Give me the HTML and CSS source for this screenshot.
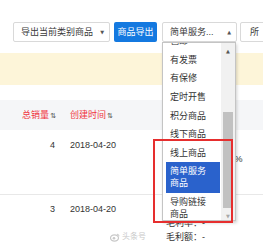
FILE: index.html
```html
<!DOCTYPE html>
<html>
<head>
<meta charset="utf-8">
<link rel="stylesheet" href="styles.css">
</head>
<body>
<div class="page">
  <div class="toolbar">
    <div class="select s1"><span>导出当前类别商品</span><span class="caret">▼</span></div>
    <div class="btn">商品导出</div>
    <div class="select s2"><span>简单服务...</span><span class="caret">▲</span></div>
    <div class="select s3"><span>所</span></div>
  </div>
  <div class="notice"></div>
  <div class="table">
    <div class="thead">
      <div class="c1 th">总销量<span class="sort">⇅</span></div>
      <div class="c2 th">创建时间<span class="sort">⇅</span></div>
    </div>
    <div class="row r1">
      <div class="c1">4</div>
      <div class="c2">2018-04-20</div>
      <div class="c3">
        <div>成本价：-</div>
        <div>毛利率：1000.00%</div>
        <div>毛利额：-</div>
      </div>
    </div>
    <div class="row r2">
      <div class="c1">3</div>
      <div class="c2">2018-04-20</div>
      <div class="c3">
        <div>成本价：-</div>
        <div>毛利率：-</div>
        <div>毛利额：-</div>
      </div>
    </div>
  </div>
  <div class="watermark"><svg width="10" height="9" viewBox="0 0 10 9"><ellipse cx="4.5" cy="5" rx="4" ry="3.2" fill="none" stroke="#c9c9c9" stroke-width="1.2"/><circle cx="4" cy="5.3" r="1.3" fill="#c9c9c9"/><path d="M7 1.2a2 2 0 0 1 2 2" fill="none" stroke="#c9c9c9" stroke-width="1"/></svg><span>头条号</span></div>
  <div class="dropdown">
    <div class="opts">
      <div class="optlist">
        <div class="opt">包邮</div>
        <div class="opt">有发票</div>
        <div class="opt">有保修</div>
        <div class="opt">定时开售</div>
        <div class="opt">积分商品</div>
        <div class="opt">线下商品</div>
        <div class="opt">线上商品</div>
        <div class="opt active">简单服务商品</div>
        <div class="opt">导购链接商品</div>
      </div>
    </div>
    <div class="scrollbar">
      <div class="sb-btn up">▲</div>
      <div class="sb-track"><div class="sb-thumb"></div></div>
      <div class="sb-btn down">▼</div>
    </div>
  </div>
  <div class="redbox"></div>
</div>
</body>
</html>
```

FILE: styles.css
```css
* { box-sizing: border-box; margin: 0; padding: 0; }
body {
  margin: 0;
  background: #fff;
  font-family: "Liberation Sans", "Noto Sans CJK SC", sans-serif;
  font-size: 9px;
  color: #333;
}
.page {
  position: relative;
  width: 263px;
  height: 247px;
  overflow: hidden;
}
.toolbar {
  display: flex;
  align-items: flex-start;
  padding: 22px 0 0 13px;
  height: 53px;
}
.select {
  flex: none;
  height: 20px;
  border: 1px solid #d9d9d9;
  border-radius: 2px;
  background: #fff;
  display: flex;
  align-items: center;
  justify-content: space-between;
  padding: 0 5px 0 7px;
  color: #3a3a3a;
  line-height: 12px;
  white-space: nowrap;
  overflow: hidden;
}
.s1 { width: 97px; }
.s2 { width: 75px; margin-left: 5px; }
.s3 { width: 40px; margin-left: 3px; padding-left: 9px; }
.caret {
  font-family: "DejaVu Sans", sans-serif;
  font-size: 5px;
  color: #555;
}
.btn {
  flex: none;
  margin-left: 4px;
  width: 43px;
  height: 20px;
  background: #1479e0;
  color: #fff;
  border-radius: 2px;
  display: flex;
  align-items: center;
  justify-content: center;
  line-height: 12px;
}
.notice {
  height: 32px;
  background: #fdf5d9;
}
.table {
  margin-top: 15px;
}
.thead, .row {
  display: grid;
  grid-template-columns: 56px 110px 1fr;
  line-height: 12px;
}
.thead {
  height: 30px;
  background: #f5f6f8;
  align-items: center;
}
.th { color: #f0353f; }
.sort {
  font-family: "DejaVu Sans", sans-serif;
  font-size: 7px;
  color: #555;
  margin-left: 1px;
}
.c1 { text-align: right; padding-right: 1px; }
.c2 { padding-left: 14px; }
.thead .c1 { padding-right: 0; }
.row { align-items: start; }
.r1 {
  height: 65px;
  padding-top: 9px;
  border-bottom: 1px solid #e8e8e8;
}
.r2 {
  padding-top: 8px;
}
.c3 {
  line-height: 14px;
  margin-top: -1px;
  white-space: nowrap;
}
.watermark {
  position: absolute;
  left: 110px;
  top: 232px;
  display: flex;
  align-items: center;
  gap: 2px;
  color: #c9c9c9;
  font-size: 8px;
  line-height: 10px;
}
.dropdown {
  position: absolute;
  left: 162px;
  top: 42px;
  width: 74px;
  height: 179px;
  border: 1px solid #c4c4c4;
  background: #fff;
  box-shadow: 1px 2px 3px rgba(0, 0, 0, 0.18);
  display: flex;
}
.opts {
  flex: 1;
  overflow: hidden;
}
.optlist {
  margin-top: -11px;
}
.opt {
  margin: 0 1px 0 3px;
  padding: 3.3px 6px 3.3px 4px;
  line-height: 12px;
  color: #333;
}
.opt.active {
  background: #2a62cc;
  color: #fff;
}
.scrollbar {
  flex: none;
  width: 14px;
  background: #f1f1f1;
  display: flex;
  flex-direction: column;
}
.sb-btn {
  flex: none;
  height: 15px;
  font-family: "DejaVu Sans", sans-serif;
  font-size: 5px;
  display: flex;
  align-items: center;
  justify-content: center;
}
.sb-btn.up { color: #555; }
.sb-btn.down { color: #a8a8a8; }
.sb-track {
  flex: 1;
  padding: 0 2px;
}
.sb-thumb {
  margin-top: 54px;
  height: 96px;
  background: #c1c1c1;
}
.redbox {
  position: absolute;
  left: 153px;
  top: 139px;
  width: 80px;
  height: 84px;
  border: 2px solid #e62e2e;
}
```
